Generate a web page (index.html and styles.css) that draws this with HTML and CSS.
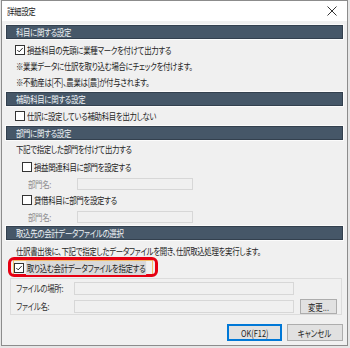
FILE: index.html
```html
<!DOCTYPE html>
<html lang="ja">
<head>
  <meta charset="UTF-8">
  <meta name="viewport" content="width=device-width, initial-scale=1.0">
  <title>詳細設定</title>
  <link rel="stylesheet" href="styles.css">
</head>
<body>

  <div class="dialog">
    <div class="titlebar">
      <span class="t title">詳細設定</span>
      <svg class="close" width="10" height="10" viewBox="0 0 10 10"><path d="M0.5 0.5 L9.5 9.5 M9.5 0.5 L0.5 9.5"/></svg>
    </div>

    <div class="content">
      <div class="section-head head-1"><span class="t">科目に関する設定</span></div>
      <div class="row row-first indent-cb">
        <span class="check"><svg viewBox="0 0 9 9"><path d="M1.5 4.5 L3.6 6.6 L7.6 2.2"/></svg></span>
        <span class="t">損益科目の先頭に業種マークを付けて出力する</span>
      </div>
      <div class="row indent-text"><span class="t">※業業データに仕訳を取り込む場合にチェックを付けます。</span></div>
      <div class="row indent-text"><span class="t">※不動産は[不]、農業は[農]が付与されます。</span></div>

      <div class="section-head"><span class="t">補助科目に関する設定</span></div>
      <div class="row row-after-head indent-cb">
        <span class="check"></span>
        <span class="t">仕訳に設定している補助科目を出力しない</span>
      </div>

      <div class="section-head"><span class="t">部門に関する設定</span></div>
      <div class="row row-tight indent-text"><span class="t">下記で指定した部門を付けて出力する</span></div>
      <div class="row row-after-head indent-sub">
        <span class="check"></span>
        <span class="t">損益関連科目に部門を設定する</span>
      </div>
      <div class="field row-tight">
        <span class="field-label"><span class="t muted">部門名:</span></span>
        <span class="input"></span>
      </div>
      <div class="row indent-sub">
        <span class="check"></span>
        <span class="t">貸借科目に部門を設定する</span>
      </div>
      <div class="field row-tight">
        <span class="field-label"><span class="t muted">部門名:</span></span>
        <span class="input"></span>
      </div>

      <div class="section-head row-tight"><span class="t">取込先の会計データファイルの選択</span></div>
      <div class="row row-first indent-text"><span class="t">仕訳書出後に、下記で指定したデータファイルを開き、仕訳取込処理を実行します。</span></div>
      <div class="row row-tight indent-focus highlight-row">
        <span class="focus-box"></span>
        <span class="mark-box"></span>
        <span class="check"><svg viewBox="0 0 9 9"><path d="M1.5 4.5 L3.6 6.6 L7.6 2.2"/></svg></span>
        <span class="t selected-text">取り込む会計データファイルを指定する</span>
      </div>

      <div class="group">
        <div class="group-row">
          <span class="group-label"><span class="t">ファイルの場所:</span></span>
          <span class="input wide"></span>
        </div>
        <div class="group-row">
          <span class="group-label"><span class="t">ファイル名:</span></span>
          <span class="input wide"></span>
          <button class="btn small"><span class="t">変更...</span></button>
        </div>
      </div>

      <div class="footer">
        <button class="btn default"><span class="t">OK(F12)</span></button>
        <button class="btn"><span class="t">キャンセル</span></button>
      </div>
    </div>
  </div>

</body>
</html>
```

FILE: styles.css
```css
* { box-sizing: border-box; }
body { margin: 0; background: #e6e6e6; font-family: "Noto Sans CJK JP", "Noto Sans", sans-serif; font-size: 9.5px; font-feature-settings: "palt"; letter-spacing: -0.4px; color: #1e1e1e; }

/* Meiryo UI is narrower than Noto, so squeeze the text a bit */
.t { display: inline-block; white-space: nowrap; transform: scaleX(0.78); transform-origin: 0 50%; }

.dialog { margin-left: 1px; width: 347px; height: 346px; border: 1px solid #8c8c8c; background: #f0f0f0; display: flex; flex-direction: column; }
.titlebar { height: 20px; flex: none; background: #fff; display: flex; align-items: center; justify-content: space-between; padding: 0 10px 0 5px; }
.title { color: #222; }
.close path { stroke: #333; stroke-width: 1; fill: none; }

.content { padding: 0 4px; }

.section-head { height: 14px; margin-top: 2px; background: #465768; border: 1px solid #33404e; box-shadow: 0 0 0 1px #fbfbfb; color: #eef2f5; padding-left: 9px; line-height: 12px; }
.head-1 { margin-top: 4px; }

.row { height: 16px; display: flex; align-items: center; white-space: nowrap; }
.row-first { margin-top: 3px; }
.row-after-head { margin-top: 2px; }
.row-tight { margin-top: 1px; }
.indent-cb { padding-left: 9px; }
.indent-text { padding-left: 10px; }
.indent-sub { padding-left: 16px; }
.indent-focus { padding-left: 8px; }

.check { width: 10px; height: 10px; border: 1px solid #333; background: #fff; margin-right: 2px; flex: none; display: flex; }
.check svg { width: 8px; height: 8px; }
.check path { stroke: #222; stroke-width: 1.1; fill: none; }

.field { height: 16px; display: flex; align-items: center; padding-left: 22px; }
.field-label { width: 49px; flex: none; }
.muted { color: #8e8e8e; }
.input { width: 116px; height: 12px; background: #f0f0f0; border: 1px solid #d7d7d7; }

.highlight-row { position: relative; }
.mark-box { position: absolute; left: 2px; top: -3px; width: 150px; height: 20px; border: 3px solid #e60012; border-radius: 6px; }
.focus-box { position: absolute; left: 7px; top: 0px; width: 140px; height: 15px; border: 1px solid #f3c06e; }
.selected-text { background: #d9d9d9; padding: 0 1px; position: relative; }

.group { margin: 2px 0 0 4px; width: 332px; height: 37px; border: 1px solid #dcdcdc; padding: 1px 0 0 5px; }
.group-row { height: 16px; display: flex; align-items: center; }
.group-row + .group-row { margin-top: 2px; }
.group-label { width: 58px; flex: none; color: #333; }
.input.wide { width: 220px; height: 13px; }

.btn { font: inherit; color: #1e1e1e; background: #e1e1e1; border: 1px solid #adadad; padding: 0; height: 17px; width: 55px; }
.btn .t { transform-origin: 50% 50%; }
.btn.small { width: 37px; height: 15px; margin-left: 6px; }
.btn.default { border: 2px solid #0078d7; }

.footer { margin-top: 9px; display: flex; justify-content: flex-end; gap: 5px; }
.footer .btn + .btn { width: 56px; }
```
